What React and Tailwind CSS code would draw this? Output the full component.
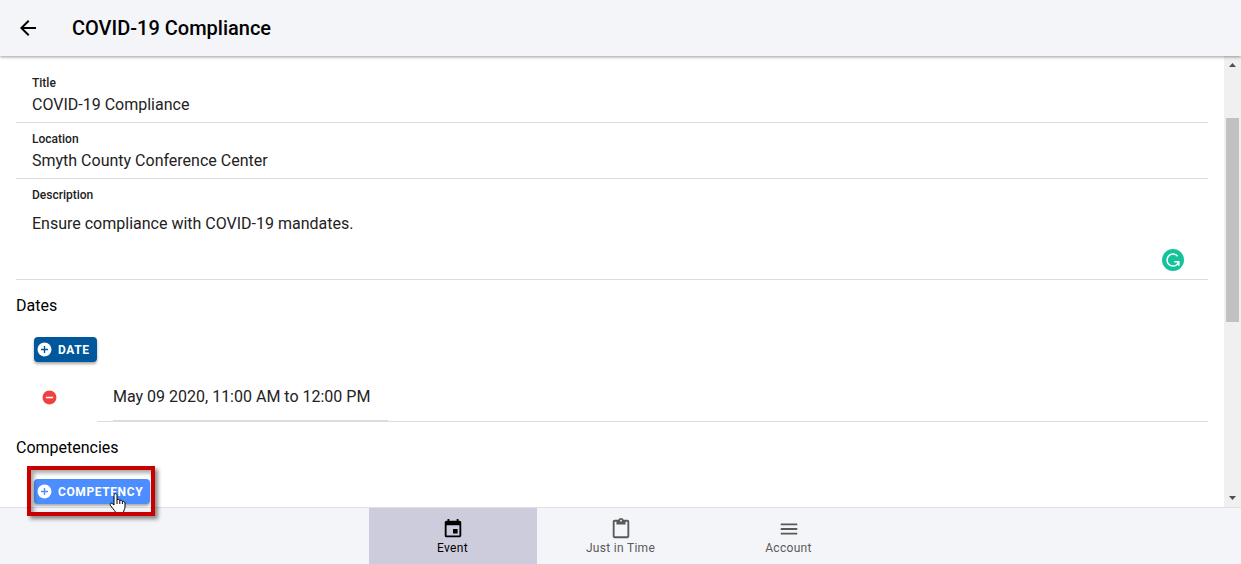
import React, { useState } from 'react';
import { MdArrowBack, MdEvent, MdOutlineContentPaste, MdMenu } from 'react-icons/md';
import { IoMdAddCircle, IoMdRemoveCircle } from 'react-icons/io';

const tabs = [
    { id: 'event', label: 'Event', icon: MdEvent },
    { id: 'jit', label: 'Just in Time', icon: MdOutlineContentPaste },
    { id: 'account', label: 'Account', icon: MdMenu },
];

export default function App() {
    const [tab, setTab] = useState('event');
    const [title, setTitle] = useState('COVID-19 Compliance');
    const [location, setLocation] = useState('Smyth County Conference Center');
    const [description, setDescription] = useState('Ensure compliance with COVID-19 mandates.');
    const [date, setDate] = useState('May 09 2020, 11:00 AM to 12:00 PM');

    return (
        <div className="flex flex-col h-screen bg-white font-['Roboto',sans-serif] text-base text-black">
            {/* Header */}
            <header className="relative z-10 flex items-center h-14 shrink-0 bg-[#f4f5f9] px-4 gap-8 shadow-[0_1px_3px_rgba(0,0,0,0.4)]">
                <button type="button" aria-label="Back" className="w-6 h-6 flex items-center justify-center">
                    <MdArrowBack size={24} />
                </button>
                <h1 className="text-xl font-medium">{title}</h1>
            </header>

            <div className="flex flex-1 min-h-0">
                <main className="flex-1 min-w-0 px-4 pt-[11px]">
                    <Field id="title" label="Title" value={title} onChange={setTitle} />
                    <Field id="location" label="Location" value={location} onChange={setLocation} />

                    <div className="relative border-b border-[#dcdcdc] px-4 pt-2 h-[101px]">
                        <label htmlFor="description" className="block text-xs leading-4 font-medium text-[#222]">Description</label>
                        <textarea
                            id="description"
                            value={description}
                            onChange={(e) => setDescription(e.target.value)}
                            className="block w-full h-16 pt-[9px] leading-6 text-[#222] resize-none outline-none"
                        />
                        <AssistantBadge />
                    </div>

                    <h2 className="leading-6 mt-3.5">Dates</h2>
                    <div className="ml-[18px] mt-[19px]">
                        <AddButton label="Date" className="bg-[#00579c]" />
                    </div>
                    <div className="flex mt-2">
                        <div className="w-[81px] pl-[25px] pt-[19px]">
                            <button type="button" aria-label="Remove date" className="block text-[#f04141]">
                                <IoMdRemoveCircle size={17} />
                            </button>
                        </div>
                        <div className="flex-1 border-b border-[#dcdcdc] pl-4 pt-2">
                            <input
                                type="text"
                                aria-label="Event date"
                                value={date}
                                onChange={(e) => setDate(e.target.value)}
                                className="block w-[275px] h-[43px] border-b border-[#dcdcdc] pb-1.5 text-[#222] outline-none"
                            />
                        </div>
                    </div>

                    <h2 className="leading-6 mt-3.5">Competencies</h2>
                    <div className="relative w-fit ml-[18px] mt-[19px]">
                        <AddButton label="Competency" className="bg-[#4c8dff]" />
                        <div className="absolute z-20 -left-[7px] -right-[5px] -top-[13px] -bottom-3 border-4 border-[#c80000] shadow-[3px_3px_4px_rgba(0,0,0,0.45),inset_3px_3px_4px_rgba(0,0,0,0.35)] overflow-hidden pointer-events-none">
                            <HandCursor />
                        </div>
                    </div>
                </main>

                <Scrollbar />
            </div>

            {/* Tab bar */}
            <nav className="flex justify-center shrink-0 h-[57px] bg-[#f4f5f9] border-t border-[#dfe0e6]">
                {tabs.map(({ id, label, icon: Icon }) => (
                    <button
                        key={id}
                        type="button"
                        onClick={() => setTab(id)}
                        className={`w-[168px] flex flex-col items-center pt-2.5 text-xs leading-4 ${tab === id ? 'bg-[#cdccdd] text-black' : 'text-[#595959]'}`}
                    >
                        <Icon size={22} />
                        <span className="tracking-wide">{label}</span>
                    </button>
                ))}
            </nav>
        </div>
    );
}

function Field({ id, label, value, onChange }) {
    return (
        <div className="h-14 px-4 pt-2 border-b border-[#dcdcdc]">
            <label htmlFor={id} className="block text-xs leading-4 font-medium text-[#222]">{label}</label>
            <input
                id={id}
                type="text"
                value={value}
                onChange={(e) => onChange(e.target.value)}
                className="block w-full h-[26px] text-[#222] outline-none"
            />
        </div>
    );
}

function AddButton({ label, className }) {
    return (
        <button
            type="button"
            className={`flex items-center h-[25px] gap-[5px] pl-[2px] pr-[7px] rounded text-xs font-bold uppercase tracking-wider text-white shadow-[0_2px_3px_rgba(0,0,0,0.35)] ${className}`}
        >
            <IoMdAddCircle size={17} />
            {label}
        </button>
    );
}

function AssistantBadge() {
    return (
        <svg viewBox="0 0 22 22" className="absolute right-6 bottom-2 w-[22px] h-[22px]" aria-hidden="true">
            <circle cx="11" cy="11" r="11" fill="#15c39a" />
            <path d="M15.6 7.2A6 6 0 1 0 15.4 15.2L16.3 13" fill="none" stroke="#fff" strokeWidth="1.5" />
            <path d="M12.2 12.8h4.6v4" fill="none" stroke="#fff" strokeWidth="1.5" />
        </svg>
    );
}

function HandCursor() {
    return (
        <svg viewBox="0 0 18 22" className="absolute left-[78px] top-[23px] w-[18px] h-[22px]" aria-hidden="true">
            <path
                d="M5 12V2.2C5 .2 8 .2 8 2.2V7c.5-1 2.6-.8 2.8.6.8-.8 2.4-.4 2.6 1 1-.6 2.6 0 2.6 1.4V14c0 2-1.5 3.5-1.5 5.5V21H6.5v-2C5.5 17.5 3 14.5 1.5 12.5.3 10.7 2.3 9.5 3.5 10.7z"
                fill="#fff"
                stroke="#000"
                strokeWidth="1"
            />
            <path d="M8 7v4M10.8 7.6V11M13.4 8.6V11" fill="none" stroke="#000" strokeWidth="1" />
        </svg>
    );
}

function Scrollbar() {
    return (
        <div className="flex flex-col w-[17px] shrink-0 bg-[#f0f0f0]" aria-hidden="true">
            <svg viewBox="0 0 17 17" className="w-[17px] h-[17px] mb-[45px]">
                <path d="M5 11h7L8.5 7z" fill="#505050" />
            </svg>
            <div className="h-[204px] mx-[2px] bg-[#c1c1c1]" />
            <svg viewBox="0 0 17 17" className="w-[17px] h-[17px] mt-auto">
                <path d="M5 6h7L8.5 10z" fill="#505050" />
            </svg>
        </div>
    );
}
